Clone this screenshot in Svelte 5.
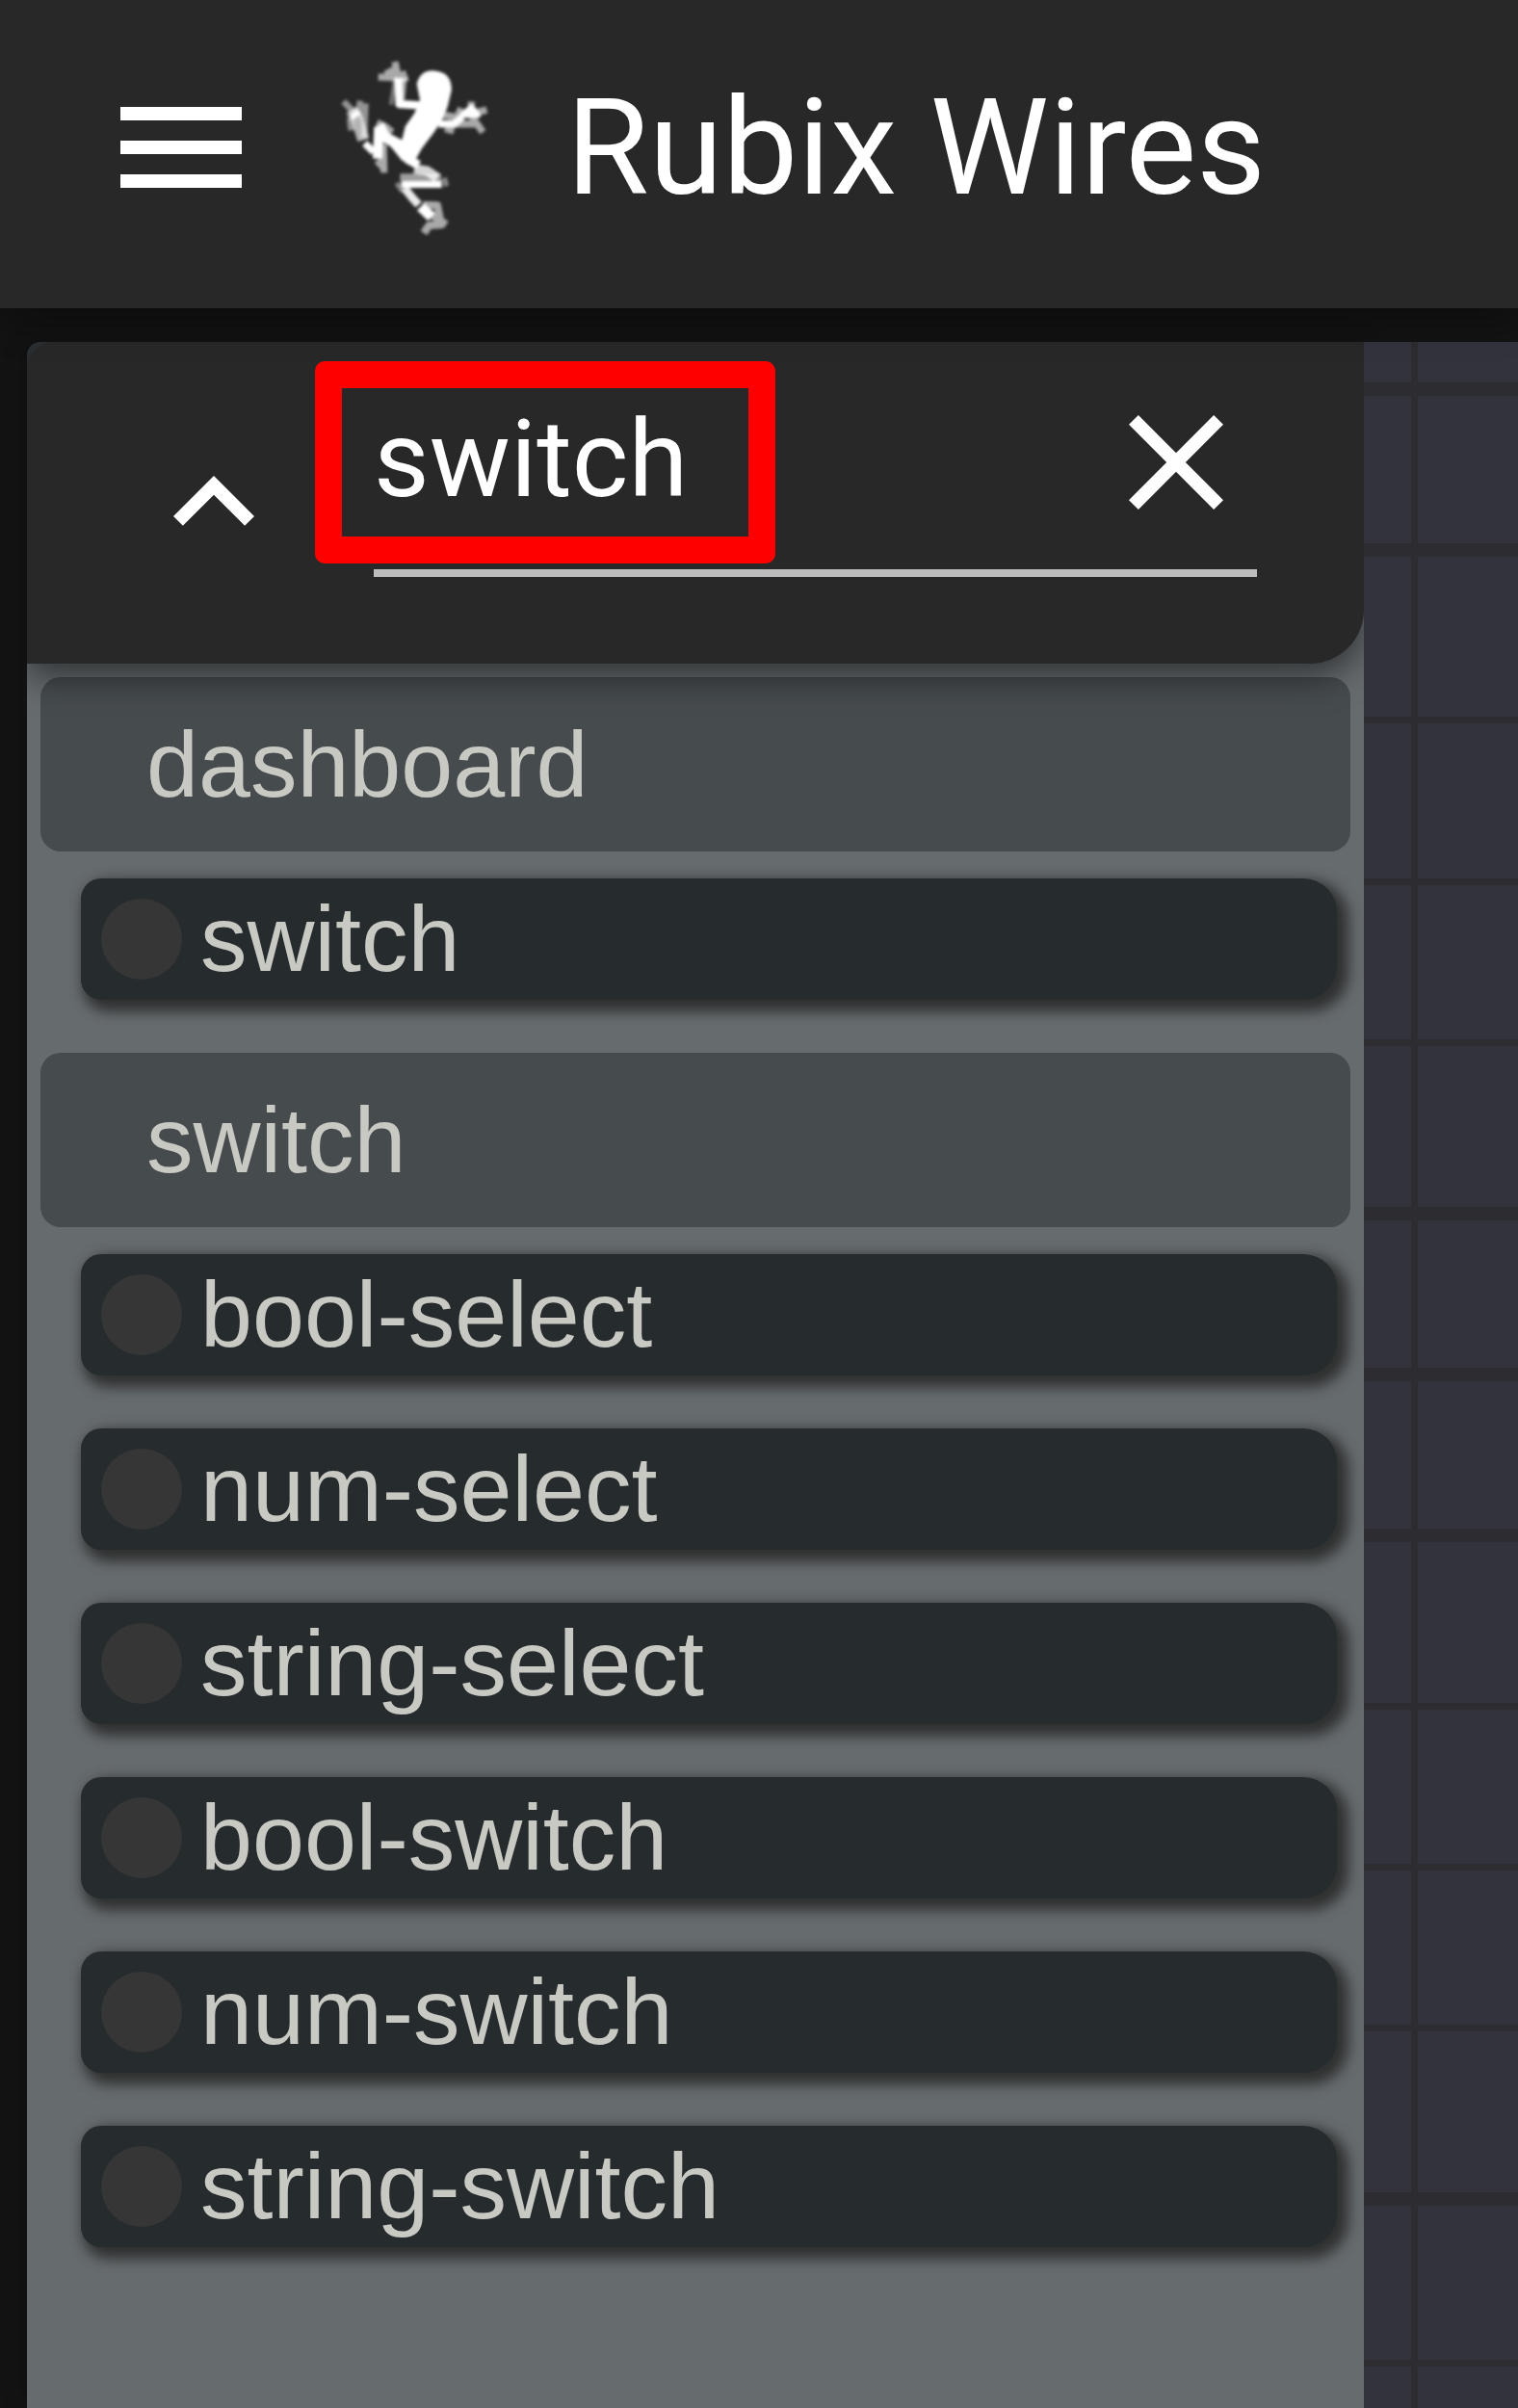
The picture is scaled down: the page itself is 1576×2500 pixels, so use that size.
<script>
  let query = $state('switch');

  const groups = [
    { name: 'dashboard', nodes: ['switch'] },
    {
      name: 'switch',
      nodes: ['bool-select', 'num-select', 'string-select', 'bool-switch', 'num-switch', 'string-switch']
    }
  ];

  // Horizontal rules of the editor canvas: offset from its top, and thickness
  const rules = [
    [42, 14], [209, 14], [389, 7], [557, 7], [724, 7], [898, 14], [1065, 14],
    [1232, 14], [1413, 7], [1580, 7], [1747, 7], [1921, 14], [2095, 7]
  ];
</script>

<div class="app">
  <header class="topbar">
    <button class="icon" aria-label="Menu">
      <svg viewBox="0 0 24 24"><path d="M3 18h18v-2H3v2zm0-5h18v-2H3v2zm0-7v2h18V6H3z" /></svg>
    </button>
    <svg class="logo" viewBox="0 -6 600 630" role="img" aria-label="Frog logo">
      <filter id="soften" x="-10%" y="-10%" width="120%" height="120%">
        <feGaussianBlur stdDeviation="5" />
      </filter>
      <g filter="url(#soften)">
        <path class="fill" d="M308 112C318 70 350 66 372 72C402 76 418 98 416 132L404 182L388 222L362 262L324 312L304 348L318 368L262 350L238 320L224 304L262 286L272 244L300 204L318 162Z" />
        <g class="limb">
          <path d="M318 178L254 174L250 92" stroke-width="25" />
          <path d="M262 160L268 92" stroke-width="18" opacity=".6" />
          <path d="M250 92L188 90M250 92L240 42M236 68L210 82M262 72L274 104" stroke-width="22" opacity=".6" />
          <path d="M240 100L228 176" stroke-width="14" opacity=".35" />
          <path d="M376 236L424 236L450 214" stroke-width="23" />
          <path d="M450 208L498 208L478 184Z" stroke-width="18" />
          <path d="M478 200L478 166M480 204L526 192M480 214L514 262M462 206L432 192M390 208L436 216M396 250L424 258M430 236L500 236" stroke-width="22" opacity=".6" />
          <path d="M256 302L210 278L190 240" stroke-width="34" />
          <path d="M190 246L186 344" stroke-width="30" />
          <path d="M204 300L206 388M184 350L206 374M184 232L210 244L232 262" stroke-width="22" opacity=".6" />
          <path d="M174 324L146 296" stroke-width="22" />
          <path d="M112 200L122 214" stroke-width="32" />
          <path d="M142 286L122 220L104 192" stroke-width="38" opacity=".65" />
          <path d="M122 210L80 166M126 206L132 164M130 214L156 214M144 280L148 172M104 256L100 216" stroke-width="20" opacity=".5" />
          <path d="M276 344L314 364" stroke-width="28" />
          <path d="M300 376L340 382L372 404" stroke-width="30" opacity=".8" />
          <path d="M256 402L384 402" stroke-width="22" opacity=".55" />
          <path d="M260 424L386 424" stroke-width="22" />
          <path d="M270 436L294 466L314 488" stroke-width="26" opacity=".9" />
          <path d="M320 494L354 526" stroke-width="32" />
          <path d="M328 488L372 490L384 550L346 552L330 576M356 520L400 550" stroke-width="24" opacity=".6" />
          <path d="M246 420L264 446M394 404L400 430" stroke-width="16" opacity=".45" />
        </g>
      </g>
    </svg>
    <h1>Rubix Wires</h1>
  </header>

  <main class="stage">
    <aside class="panel">
      <div class="search">
        <button class="icon" aria-label="Collapse all">
          <svg viewBox="0 0 24 24"><path d="M12 8l-6 6 1.41 1.41L12 10.83l4.59 4.58L18 14z" /></svg>
        </button>
        <div class="field">
          <input type="text" aria-label="Search nodes" bind:value={query} />
          <button class="icon" aria-label="Clear search" onclick={() => (query = '')}>
            <svg viewBox="0 0 24 24"><path d="M19 6.41L17.59 5 12 10.59 6.41 5 5 6.41 10.59 12 5 17.59 6.41 19 12 13.41 17.59 19 19 17.59 13.41 12z" /></svg>
          </button>
          <span class="highlight"></span>
        </div>
      </div>

      <div class="groups">
        {#each groups as group}
          <section>
            <h2>{group.name}</h2>
            <ul>
              {#each group.nodes as node}
                <li><span class="dot"></span>{node}</li>
              {/each}
            </ul>
          </section>
        {/each}
      </div>
    </aside>

    <svg class="canvas" aria-hidden="true">
      <rect x="49" y="0" width="7" height="100%" />
      {#each rules as [y, thickness]}
        <rect x="0" {y} width="100%" height={thickness} />
      {/each}
    </svg>
  </main>
</div>

<style>
  :global(body) {
    margin: 0;
    background: #131313;
  }

  .app {
    display: flex;
    flex-direction: column;
    min-height: 100vh;
    font-family: Roboto, sans-serif;
    color: #fff;
  }

  .topbar {
    position: relative;
    z-index: 1;
    box-sizing: border-box;
    display: flex;
    align-items: center;
    gap: 58px;
    height: 320px;
    padding: 0 104px 14px;
    background: #282828;
    box-shadow: 0 14px 35px rgba(0, 0, 0, 0.3);
  }

  h1 {
    margin: 0;
    font-size: 139px;
    font-weight: 400;
    white-space: nowrap;
  }

  .icon {
    flex: none;
    width: 168px;
    height: 168px;
    padding: 0;
    border: 0;
    background: none;
    color: inherit;
    cursor: pointer;
  }

  .icon svg {
    display: block;
    width: 100%;
    height: 100%;
    fill: currentColor;
  }

  .logo {
    flex: none;
    width: 200px;
    height: 210px;
  }

  .fill {
    fill: #fff;
  }

  .limb {
    fill: none;
    stroke: #fff;
    stroke-linejoin: round;
  }

  .stage {
    flex: 1;
    display: flex;
    padding: 35px 0 0 28px;
  }

  .panel {
    flex: 1;
    min-width: 0;
    border-radius: 14px 0 0 0;
    background: linear-gradient(#303336 40px, #666b6e 40px);
    box-shadow: 0 0 28px rgba(0, 0, 0, 0.2);
  }

  .search {
    position: relative;
    display: flex;
    align-items: center;
    gap: 82px;
    padding: 0 111px 0 110px;
    border-radius: 28px 0 56px 0;
    background: #282828;
    box-shadow: 0 14px 35px rgba(0, 0, 0, 0.5);
    clip-path: inset(0 0 -70px 0);
  }

  .field {
    position: relative;
    flex: 1;
    display: flex;
    min-width: 0;
    margin: 41px 0 90px;
    padding-bottom: 27px;
    border-bottom: 8px solid #bdbdbd;
  }

  input {
    flex: 1;
    min-width: 0;
    padding: 0 0 8px;
    border: 0;
    outline: 0;
    background: none;
    color: inherit;
    font: 112px Roboto, sans-serif;
  }

  .highlight {
    position: absolute;
    box-sizing: border-box;
    top: -21px;
    left: -61px;
    width: 478px;
    height: 210px;
    border: 28px solid #f00;
    border-radius: 10px;
    pointer-events: none;
  }

  .groups {
    padding: 14px;
    font-family: "Liberation Sans", sans-serif;
    font-size: 97px;
    color: #c8c9c2;
  }

  h2 {
    display: flex;
    align-items: center;
    height: 181px;
    margin: 0 0 28px;
    padding: 0 110px;
    border-radius: 21px;
    background: rgba(38, 43, 46, 0.5);
    font-size: inherit;
    font-weight: 400;
  }

  ul {
    margin: 0;
    padding: 0 14px 0 42px;
    list-style: none;
  }

  li {
    display: flex;
    align-items: center;
    gap: 19px;
    height: 126px;
    margin-bottom: 55px;
    padding: 0 21px;
    border-radius: 21px 35px 35px 21px;
    background: #262b2e;
    box-shadow: 7px 7px 14px 5px #2f3030;
    white-space: nowrap;
  }

  .dot {
    flex: none;
    width: 84px;
    height: 84px;
    border-radius: 50%;
    background: #363636;
  }

  .canvas {
    flex: none;
    width: 160px;
    height: auto;
    background: #33333d;
    fill: #2d2c30;
  }
</style>
